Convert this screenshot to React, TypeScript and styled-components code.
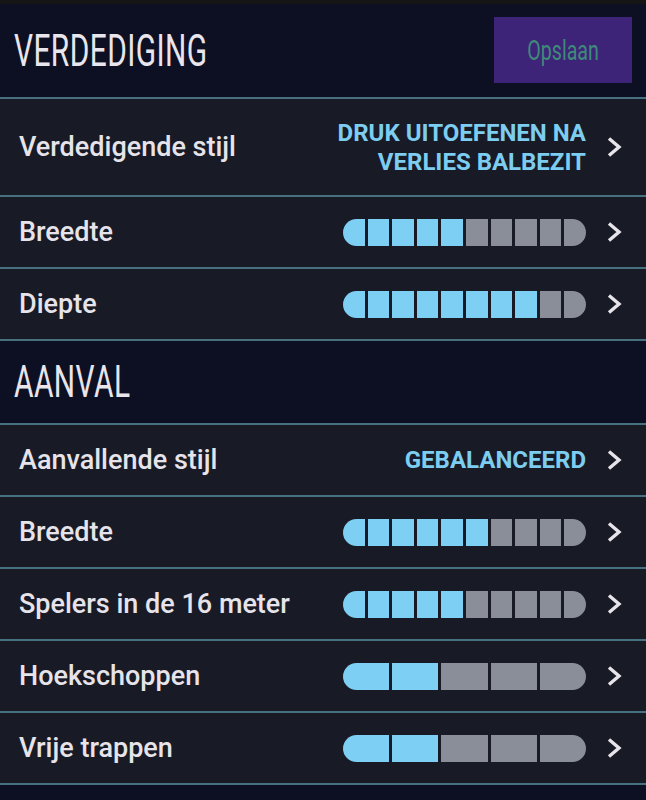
import styled, { createGlobalStyle } from 'styled-components';

const GlobalStyle = createGlobalStyle`
  html, body {
    margin: 0;
    padding: 0;
    background: #0d0f23;
  }
  body {
    font-family: Roboto, 'Liberation Sans', sans-serif;
  }
`;

type BarSetting = { kind: 'bar'; label: string; filled: number; total: number };
type TextSetting = { kind: 'text'; label: string; value: string[] };
type Setting = BarSetting | TextSetting;

interface Section {
  title: string;
  save?: boolean;
  items: Setting[];
}

const sections: Section[] = [
  {
    title: 'VERDEDIGING',
    save: true,
    items: [
      { kind: 'text', label: 'Verdedigende stijl', value: ['DRUK UITOEFENEN NA', 'VERLIES BALBEZIT'] },
      { kind: 'bar', label: 'Breedte', filled: 5, total: 10 },
      { kind: 'bar', label: 'Diepte', filled: 8, total: 10 },
    ],
  },
  {
    title: 'AANVAL',
    items: [
      { kind: 'text', label: 'Aanvallende stijl', value: ['GEBALANCEERD'] },
      { kind: 'bar', label: 'Breedte', filled: 6, total: 10 },
      { kind: 'bar', label: 'Spelers in de 16 meter', filled: 5, total: 10 },
      { kind: 'bar', label: 'Hoekschoppen', filled: 2, total: 5 },
      { kind: 'bar', label: 'Vrije trappen', filled: 2, total: 5 },
    ],
  },
];

const Chevron = () => (
  <svg width="16" height="22" viewBox="0 0 16 22" fill="none">
    <polyline points="3,2.5 13,11 3,19.5" stroke="#e8e5ea" strokeWidth="3.4" strokeLinejoin="miter" />
  </svg>
);

const Bar = ({ filled, total }: { filled: number; total: number }) => (
  <Track>
    {Array.from({ length: total }).map((_, i) => (
      <Segment key={i} $on={i < filled} />
    ))}
  </Track>
);

const App = () => {
  return (
    <>
      <GlobalStyle />
      <Page>
        <TopStrip />
        {sections.map((section, si) => (
          <div key={section.title}>
            <Header $first={si === 0}>
              <Title>{section.title}</Title>
              {section.save && (
                <SaveButton>
                  <span>Opslaan</span>
                </SaveButton>
              )}
            </Header>
            {section.items.map((item, i) => (
              <Row key={item.label + i} $tall={item.kind === 'text' && item.value.length > 1}>
                <Label>{item.label}</Label>
                <Right>
                  {item.kind === 'text' ? (
                    <Value>
                      {item.value.map((line) => (
                        <div key={line}>{line}</div>
                      ))}
                    </Value>
                  ) : (
                    <Bar filled={item.filled} total={item.total} />
                  )}
                  <Chevron />
                </Right>
              </Row>
            ))}
          </div>
        ))}
      </Page>
    </>
  );
};

export default App;

const Page = styled.div`
  width: 646px;
  min-height: 800px;
  background: #0d0f23;
`;

const TopStrip = styled.div`
  height: 4px;
  background: #151516;
`;

const Header = styled.div<{ $first: boolean }>`
  height: ${({ $first }) => ($first ? '93px' : '82px')};
  display: flex;
  align-items: center;
  justify-content: space-between;
  padding: 0 14px;
  background: #0d0f23;
  border-bottom: 2px solid #48717f;
`;

const Title = styled.h2`
  margin: 0;
  font-family: Roboto, 'DejaVu Sans', sans-serif;
  font-weight: 400;
  font-size: 44px;
  color: #e8e5ec;
  display: inline-block;
  transform: scaleX(0.68);
  transform-origin: left center;
  letter-spacing: 0.6px;
`;

const SaveButton = styled.button`
  width: 138px;
  height: 66px;
  margin-top: -1px;
  border: none;
  background: #3d2479;
  color: #3f8a79;
  font-family: Roboto, sans-serif;
  font-size: 28px;
  cursor: pointer;
  padding: 0;

  span {
    display: inline-block;
    transform: scaleX(0.7);
  }
`;

const Row = styled.div<{ $tall: boolean }>`
  height: ${({ $tall }) => ($tall ? '96px' : '70px')};
  display: flex;
  align-items: center;
  padding: 0 24px 0 19px;
  background: #181a26;
  border-bottom: 2px solid #48717f;
`;

const Label = styled.div`
  flex: 1;
  font-size: 27px;
  font-weight: 500;
  color: #e6e4ea;
`;

const Right = styled.div`
  display: flex;
  align-items: center;
  gap: 20px;
`;

const Value = styled.div`
  text-align: right;
  font-size: 24px;
  font-weight: 700;
  line-height: 29px;
  color: #7dcdf1;
  margin-top: 1px;
`;

const Track = styled.div`
  width: 243px;
  height: 27px;
  display: flex;
  gap: 3px;
`;

const Segment = styled.div<{ $on: boolean }>`
  flex: 1;
  background: ${({ $on }) => ($on ? '#7dcff3' : '#898e98')};

  &:first-child {
    border-radius: 14px 0 0 14px;
  }
  &:last-child {
    border-radius: 0 14px 14px 0;
  }
`;
